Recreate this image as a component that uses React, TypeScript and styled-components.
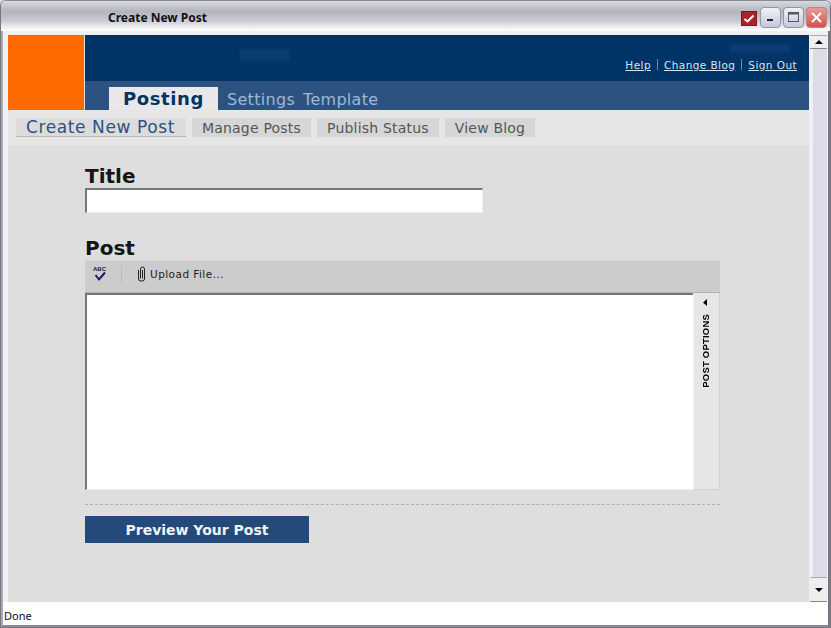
import styled, { createGlobalStyle } from "styled-components";

const GlobalStyle = createGlobalStyle`
  html, body {
    margin: 0;
    padding: 0;
    background: #d8d8e0;
  }
`;

const Verdana = `"DejaVu Sans", Verdana, sans-serif`;

const Win = styled.div`
  width: 831px;
  height: 628px;
  box-sizing: border-box;
  display: flex;
  flex-direction: column;
  overflow: hidden;
  background: #fff;
  border: 1px solid #77777f;
  border-top-color: #8a8a92;
  border-radius: 6px 6px 0 0;
`;

const TitleBar = styled.div`
  height: 30px;
  flex: none;
  box-sizing: border-box;
  display: flex;
  align-items: center;
  padding: 2px 3px 0 107px;
  background: linear-gradient(#d9d9df 0%, #b4b4bf 35%, #c9c9d1 65%, #f4f4f8 92%, #fff 100%);
`;

const TitleText = styled.div`
  flex: 1;
  font: bold 12px "Noto Sans", Tahoma, sans-serif;
  color: #111;
`;

const Check = styled.div`
  width: 16px;
  height: 15px;
  margin: 2px 1px 0 0;
  background: #a8242c;
  border: 1px solid #7a1a20;
  box-sizing: border-box;
  display: flex;
  align-items: center;
  justify-content: center;
`;

const WinBtn = styled.div<{ $close?: boolean }>`
  width: 21px;
  height: 21px;
  margin-left: 2px;
  box-sizing: border-box;
  border-radius: 4px;
  border: 1px solid ${(p) => (p.$close ? "#c08088" : "#8f97a8")};
  background: ${(p) =>
    p.$close
      ? "linear-gradient(#e89a98, #d8504c)"
      : "linear-gradient(#f2f2f6, #c4c8d8)"};
  display: flex;
  align-items: center;
  justify-content: center;
`;

const Body = styled.div`
  flex: 1;
  display: flex;
  min-height: 0;
  padding: 4px 1px 0 5px;
  background: #f0f0f2;
  border-left: 2px solid #a9a9b1;
  border-right: 2px solid #77777f;
`;

const Page = styled.div`
  flex: 1;
  display: flex;
  flex-direction: column;
  background: #dedede;
  min-width: 0;
`;

const Header = styled.div`
  display: flex;
  height: 75px;
  flex: none;
`;

const Logo = styled.div`
  width: 76px;
  background: #ff6a00;
  margin-right: 1px;
`;

const HeaderMain = styled.div`
  flex: 1;
  display: flex;
  flex-direction: column;
`;

const TopBand = styled.div`
  position: relative;
  height: 46px;
  background: #003366;
  box-sizing: border-box;
  padding: 13px 12px 0 0;
  display: flex;
  justify-content: flex-end;
  align-items: center;
`;

// faint blurred header lettering in the reference, too dim to read
const Smudge = styled.div<{ $left: number; $top: number; $w: number; $h: number }>`
  position: absolute;
  left: ${(p) => p.$left}px;
  top: ${(p) => p.$top}px;
  width: ${(p) => p.$w}px;
  height: ${(p) => p.$h}px;
  background: #0a3c72;
  filter: blur(1.5px);
`;

const HeaderLinks = styled.div`
  display: flex;
  align-items: center;
  font: 10.5px ${Verdana};
`;

const HeaderLink = styled.a`
  color: #d4e4f4;
  text-decoration: underline;
  letter-spacing: 0.42px;
`;

const Pipe = styled.span`
  width: 1px;
  height: 11px;
  margin: 0 6px;
  background: #6f8cab;
`;

const TabBand = styled.div`
  flex: 1;
  display: flex;
  align-items: flex-end;
  padding-left: 24px;
  background: #2c5380;
`;

const ActiveTab = styled.div`
  width: 109px;
  height: 23px;
  display: flex;
  align-items: center;
  justify-content: center;
  background: #e8e8e8;
  color: #003366;
  font: bold 18px ${Verdana};
  letter-spacing: 0.6px;
`;

const Tab = styled.div<{ $first?: boolean }>`
  font: 16px ${Verdana};
  color: #9db8d6;
  letter-spacing: 0.3px;
  margin-left: ${(p) => (p.$first ? "9px" : "8px")};
  height: 20px;
  line-height: 20px;
`;

const SubNav = styled.div`
  height: 35px;
  flex: none;
  box-sizing: border-box;
  display: flex;
  align-items: flex-start;
  gap: 6px;
  padding: 8px 0 0 8px;
  background: #e6e6e6;
`;

const SubItem = styled.div<{ $active?: boolean }>`
  height: 19px;
  box-sizing: border-box;
  padding: ${(p) => (p.$active ? "0 11px 0 10px" : "0 10px")};
  display: flex;
  align-items: center;
  background: ${(p) => (p.$active ? "#dcdcdc" : "#d6d6d6")};
  border-bottom: ${(p) => (p.$active ? "1px solid #b8b8b8" : "none")};
  color: ${(p) => (p.$active ? "#2c5380" : "#555")};
  font: ${(p) => (p.$active ? "17px" : "14px")} ${Verdana};
  letter-spacing: ${(p) => (p.$active ? "0.6px" : "0.2px")};
`;

const Main = styled.div`
  flex: 1;
  box-sizing: border-box;
  padding: 20px 0 0 77px;
  display: flex;
  flex-direction: column;
  align-items: flex-start;
`;

const FieldLabel = styled.div<{ $gap?: number }>`
  font: bold 20px ${Verdana};
  line-height: 23px;
  color: #151515;
  margin-top: ${(p) => p.$gap || 0}px;
`;

const TitleInput = styled.div`
  width: 398px;
  height: 25px;
  box-sizing: border-box;
  background: #fff;
  border-top: 2px solid #777;
  border-left: 2px solid #777;
  border-right: 1px solid #eee;
  border-bottom: 1px solid #eee;
`;

const Toolbar = styled.div`
  width: 635px;
  height: 33px;
  box-sizing: border-box;
  display: flex;
  align-items: center;
  padding: 0 0 6px 8px;
  background: #cccccc;
  border-top: 1px solid #d6d6d6;
  border-bottom: 1px solid #b4b4b4;
`;

const ToolDivider = styled.div`
  width: 1px;
  height: 18px;
  background: #bbb;
  margin: 0 15px 0 13px;
`;

const ToolLabel = styled.span`
  font: 10.5px ${Verdana};
  color: #222;
  margin-left: 4px;
  letter-spacing: 0.45px;
`;

const EditorRow = styled.div`
  width: 635px;
  height: 197px;
  display: flex;
`;

const Editor = styled.div`
  flex: 1;
  box-sizing: border-box;
  background: #fff;
  border-top: 2px solid #777;
  border-left: 2px solid #777;
  border-bottom: 1px solid #eee;
`;

const OptionsTab = styled.div`
  width: 27px;
  box-sizing: border-box;
  background: #e6e6e6;
  border-left: 1px solid #f2f2f2;
  border-right: 1px solid #d0d0d0;
  border-bottom: 1px solid #d0d0d0;
  display: flex;
  flex-direction: column;
  align-items: center;
  padding: 6px 3px 0 0;
`;

const OptionsText = styled.div`
  writing-mode: vertical-rl;
  transform: rotate(180deg);
  font: bold 9.5px "Liberation Sans", Arial, sans-serif;
  color: #000;
  margin-top: 8px;
  letter-spacing: 0.2px;
`;

const Dashed = styled.div`
  width: 635px;
  height: 0;
  margin-top: 14px;
  border-top: 1px dashed #b0b0b0;
`;

const PreviewButton = styled.button`
  width: 224px;
  height: 27px;
  margin-top: 11px;
  padding: 0;
  border: none;
  background: #234a78;
  color: #eef4fa;
  font: bold 14px ${Verdana};
`;

const ScrollBar = styled.div`
  width: 17px;
  flex: none;
  display: flex;
  flex-direction: column;
  background: linear-gradient(90deg, #f0f0f2 0 3px, #dcdce8 3px);
  margin-left: 1px;
`;

const ScrollEnd = styled.div<{ $h: number }>`
  height: ${(p) => p.$h}px;
  flex: none;
  box-sizing: border-box;
  background: #eeeeee;
  border-bottom: 1px solid #888;
  border-top: 1px solid #aaa;
  display: flex;
  align-items: center;
  justify-content: center;
`;

const Track = styled.div`
  flex: 1;
`;

const StatusBar = styled.div`
  height: 25px;
  flex: none;
  box-sizing: border-box;
  padding: 7px 0 0 1px;
  background: #fff;
  border-left: 2px solid #a9a9b1;
  border-right: 2px solid #77777f;
  border-bottom: 2px solid #8a8a92;
  font: 11px/14px "Noto Sans", Tahoma, sans-serif;
  color: #111;
`;

const Arrow = ({ dir }: { dir: "up" | "down" | "left" }) => {
  const pts = dir === "up" ? "0,5 8,5 4,1" : dir === "down" ? "0,1 8,1 4,5" : "5,0 5,7 1,3.5";
  return (
    <svg width={dir === "left" ? 6 : 8} height={dir === "left" ? 7 : 6}>
      <polygon points={pts} fill="#000" />
    </svg>
  );
};

const App = () => {
  return (
    <>
      <GlobalStyle />
      <Win>
        <TitleBar>
          <TitleText>Create New Post</TitleText>
          <Check>
            <svg width="12" height="11" viewBox="0 0 12 11">
              <path d="M1.5 6 L4.5 8.5 L10.5 2.5" fill="none" stroke="#fff" strokeWidth="2" />
            </svg>
          </Check>
          <WinBtn>
            <svg width="11" height="11" viewBox="0 0 11 11">
              <rect x="2" y="7" width="6" height="2" fill="#223" />
            </svg>
          </WinBtn>
          <WinBtn>
            <svg width="13" height="12" viewBox="0 0 13 12">
              <rect x="1.5" y="1.5" width="10" height="9" fill="none" stroke="#556" />
              <rect x="1.5" y="1.5" width="10" height="2" fill="#556" />
            </svg>
          </WinBtn>
          <WinBtn $close>
            <svg width="13" height="13" viewBox="0 0 13 13">
              <path d="M2 2 L11 11 M11 2 L2 11" stroke="#fff" strokeWidth="2" />
            </svg>
          </WinBtn>
        </TitleBar>
        <Body>
          <Page>
            <Header>
              <Logo />
              <HeaderMain>
                <TopBand>
                  <Smudge $left={155} $top={14} $w={50} $h={12} />
                  <Smudge $left={645} $top={9} $w={60} $h={9} />
                  <HeaderLinks>
                    <HeaderLink>Help</HeaderLink>
                    <Pipe />
                    <HeaderLink>Change Blog</HeaderLink>
                    <Pipe />
                    <HeaderLink>Sign Out</HeaderLink>
                  </HeaderLinks>
                </TopBand>
                <TabBand>
                  <ActiveTab>Posting</ActiveTab>
                  <Tab $first>Settings</Tab>
                  <Tab>Template</Tab>
                </TabBand>
              </HeaderMain>
            </Header>
            <SubNav>
              <SubItem $active>Create New Post</SubItem>
              <SubItem>Manage Posts</SubItem>
              <SubItem>Publish Status</SubItem>
              <SubItem>View Blog</SubItem>
            </SubNav>
            <Main>
              <FieldLabel>Title</FieldLabel>
              <TitleInput />
              <FieldLabel $gap={24}>Post</FieldLabel>
              <Toolbar>
                <svg width="15" height="17" viewBox="0 0 15 17">
                  <text x="0" y="6" fontSize="6" fontWeight="bold" fontFamily="Liberation Sans" fill="#222">
                    ABC
                  </text>
                  <path d="M2.5 10 L6 14.5 L12 7.5" fill="none" stroke="#1a1a70" strokeWidth="2" />
                </svg>
                <ToolDivider />
                <svg width="9" height="16" viewBox="0 0 9 16">
                  <path
                    d="M1.5 4 V13 Q1.5 15 4 15 H5 Q7.5 15 7.5 13 V3 Q7.5 1 5.5 1 T3.5 3 V12.5 M5.5 4 V12.5"
                    fill="none"
                    stroke="#222"
                    strokeWidth="1"
                  />
                </svg>
                <ToolLabel>Upload File...</ToolLabel>
              </Toolbar>
              <EditorRow>
                <Editor />
                <OptionsTab>
                  <Arrow dir="left" />
                  <OptionsText>POST OPTIONS</OptionsText>
                </OptionsTab>
              </EditorRow>
              <Dashed />
              <PreviewButton>Preview Your Post</PreviewButton>
            </Main>
          </Page>
          <ScrollBar>
            <ScrollEnd $h={14}>
              <Arrow dir="up" />
            </ScrollEnd>
            <Track />
            <ScrollEnd $h={25}>
              <Arrow dir="down" />
            </ScrollEnd>
          </ScrollBar>
        </Body>
        <StatusBar>Done</StatusBar>
      </Win>
    </>
  );
};

export default App;
